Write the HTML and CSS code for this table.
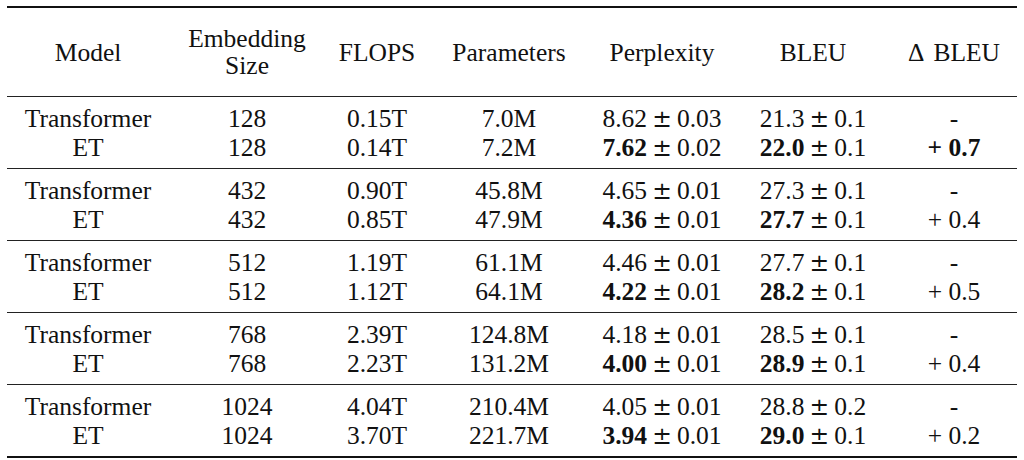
FILE: index.html
```html
<!DOCTYPE html>
<html>
<head>
<meta charset="utf-8">
<link rel="stylesheet" href="styles.css">
</head>
<body>
<table class="results">
  <colgroup>
    <col class="c-model"><col class="c-emb"><col class="c-flops"><col class="c-params"><col class="c-ppl"><col class="c-bleu"><col class="c-delta">
  </colgroup>
  <thead>
    <tr>
      <th>Model</th>
      <th>Embedding<br>Size</th>
      <th>FLOPS</th>
      <th>Parameters</th>
      <th>Perplexity</th>
      <th>BLEU</th>
      <th><span class="delta">&Delta;</span>BLEU</th>
    </tr>
  </thead>
  <tbody>
    <tr><td>Transformer</td><td>128</td><td>0.15T</td><td>7.0M</td><td>8.62<span class="pm">&plusmn;</span>0.03</td><td>21.3<span class="pm">&plusmn;</span>0.1</td><td>-</td></tr>
    <tr><td>ET</td><td>128</td><td>0.14T</td><td>7.2M</td><td><b>7.62</b><span class="pm">&plusmn;</span>0.02</td><td><b>22.0</b><span class="pm">&plusmn;</span>0.1</td><td><b>+ 0.7</b></td></tr>
  </tbody>
  <tbody>
    <tr><td>Transformer</td><td>432</td><td>0.90T</td><td>45.8M</td><td>4.65<span class="pm">&plusmn;</span>0.01</td><td>27.3<span class="pm">&plusmn;</span>0.1</td><td>-</td></tr>
    <tr><td>ET</td><td>432</td><td>0.85T</td><td>47.9M</td><td><b>4.36</b><span class="pm">&plusmn;</span>0.01</td><td><b>27.7</b><span class="pm">&plusmn;</span>0.1</td><td>+ 0.4</td></tr>
  </tbody>
  <tbody>
    <tr><td>Transformer</td><td>512</td><td>1.19T</td><td>61.1M</td><td>4.46<span class="pm">&plusmn;</span>0.01</td><td>27.7<span class="pm">&plusmn;</span>0.1</td><td>-</td></tr>
    <tr><td>ET</td><td>512</td><td>1.12T</td><td>64.1M</td><td><b>4.22</b><span class="pm">&plusmn;</span>0.01</td><td><b>28.2</b><span class="pm">&plusmn;</span>0.1</td><td>+ 0.5</td></tr>
  </tbody>
  <tbody>
    <tr><td>Transformer</td><td>768</td><td>2.39T</td><td>124.8M</td><td>4.18<span class="pm">&plusmn;</span>0.01</td><td>28.5<span class="pm">&plusmn;</span>0.1</td><td>-</td></tr>
    <tr><td>ET</td><td>768</td><td>2.23T</td><td>131.2M</td><td><b>4.00</b><span class="pm">&plusmn;</span>0.01</td><td><b>28.9</b><span class="pm">&plusmn;</span>0.1</td><td>+ 0.4</td></tr>
  </tbody>
  <tbody class="last">
    <tr><td>Transformer</td><td>1024</td><td>4.04T</td><td>210.4M</td><td>4.05<span class="pm">&plusmn;</span>0.01</td><td>28.8<span class="pm">&plusmn;</span>0.2</td><td>-</td></tr>
    <tr><td>ET</td><td>1024</td><td>3.70T</td><td>221.7M</td><td><b>3.94</b><span class="pm">&plusmn;</span>0.01</td><td><b>29.0</b><span class="pm">&plusmn;</span>0.1</td><td>+ 0.2</td></tr>
  </tbody>
</table>
</body>
</html>
```

FILE: styles.css
```css
html, body {
  margin: 0;
  padding: 0;
  background: #ffffff;
}

body {
  padding: 6px 7px 0 7px;
  font-family: "Liberation Serif", "Times New Roman", serif;
  font-size: 25.5px;
  color: #111111;
}

.results {
  border-collapse: collapse;
  table-layout: fixed;
  width: 1010px;
}

.c-model { width: 162px; }
.c-emb { width: 156px; }
.c-flops { width: 104px; }
.c-params { width: 160px; }
.c-ppl { width: 146px; }
.c-bleu { width: 156px; }
.c-delta { width: 126px; }

.results th,
.results td {
  padding: 0;
  text-align: center;
  white-space: nowrap;
  font-weight: normal;
}

.results thead {
  border-top: 2px solid #111111;
  border-bottom: 1.5px solid #222222;
}

.results th {
  height: 88px;
  line-height: 27px;
  vertical-align: middle;
}

.results tbody {
  border-bottom: 1.5px solid #222222;
}

.results tbody.last {
  border-bottom: 2.5px solid #111111;
}

.results td {
  line-height: 29px;
}

.results tbody tr:first-child td {
  padding-top: 7px;
}

.results tbody tr:last-child td {
  padding-bottom: 6px;
}

.pm {
  font-family: "DejaVu Serif", serif;
  font-size: 0.92em;
  line-height: 0;
  margin: 0 0.22em;
}

.delta {
  margin-right: 0.35em;
}

b {
  font-weight: bold;
}
```
